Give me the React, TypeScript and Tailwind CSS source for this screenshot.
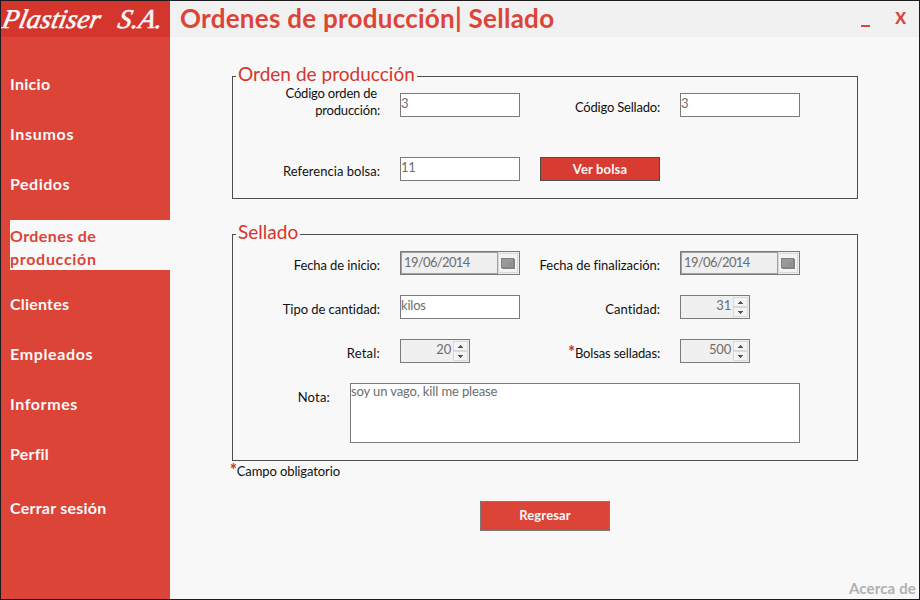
import type { ReactNode } from "react";

function Label({ children, className = "", tracking = "tracking-[0.03px]" }: { children: ReactNode; className?: string; tracking?: string }) {
  return (
    <label className={`mr-5 block shrink-0 whitespace-nowrap text-right text-[13px] leading-[17px] text-[#111] ${tracking} ${className}`}>
      {children}
    </label>
  );
}

function Field({ value }: { value: string }) {
  return (
    <div className="h-6 w-[120px] shrink-0 border border-[#7a7a7a] bg-white text-[13px] leading-[19px] tracking-[-0.2px] text-[#6d6d6d]">
      {value}
    </div>
  );
}

function DateField({ value }: { value: string }) {
  return (
    <div className="flex h-6 w-[120px] shrink-0 border border-[#7a7a7a] bg-[#f0f0f0] text-[13px] leading-[19px] text-[#6d6d6d]">
      <div className="w-[97px] border border-[#a0a0a0] pl-[2px] tracking-[-0.65px]">{value}</div>
      <div className="my-px mr-px flex flex-1 items-center justify-center border border-[#d9d9d9] bg-[#f4f4f4]">
        <svg className="shrink-0" width="14" height="11" viewBox="0 0 14 11" shapeRendering="crispEdges">
          <rect x="1" y="1" width="13" height="10" fill="#858585" />
          <rect x="0" y="0" width="13" height="10" fill="#808080" />
          <rect x="1" y="1" width="11" height="8" fill="#999" />
          <circle cx="9" cy="6" r="1.5" fill="none" stroke="#858585" strokeWidth="0.8" shapeRendering="auto" />
        </svg>
      </div>
    </div>
  );
}

function Spinner({ value }: { value: string }) {
  return (
    <div className="flex h-6 w-[70px] shrink-0 border border-[#7a7a7a] bg-[#f0f0f0] text-[13px] leading-[19px] text-[#6d6d6d]">
      <div className="flex-1 pr-[2px] text-right tracking-[-0.2px]">{value}</div>
      <div className="my-px mr-px flex w-[15px] flex-col">
        <div className="flex h-[10px] items-center justify-center border border-[#d9d9d9] bg-[#f4f4f4]">
          <svg width="5" height="3" shapeRendering="crispEdges"><path d="M2 0h1v1h1v1h1v1H0V2h1V1h1z" fill="#555" /></svg>
        </div>
        <div className="flex h-[10px] items-center justify-center border border-[#d9d9d9] bg-[#f4f4f4]">
          <svg width="5" height="3" shapeRendering="crispEdges"><path d="M0 0h5v1H4v1H3v1H2V2H1V1H0z" fill="#555" /></svg>
        </div>
      </div>
    </div>
  );
}

function NavItem({ children, className = "", tracking = "tracking-[0.3px]" }: { children: ReactNode; className?: string; tracking?: string }) {
  return (
    <a className={`flex h-[50px] items-center pb-[3px] pl-[9px] text-[16px] font-bold leading-[23px] text-[#f8f8f8] ${tracking} ${className}`}>
      <span>{children}</span>
    </a>
  );
}

function Panel({ title, className, children }: { title: string; className: string; children: ReactNode }) {
  return (
    <fieldset className={`w-[626px] border border-[#4d4d4d] ${className}`}>
      <legend className="ml-[3px] h-[21px] whitespace-nowrap px-[2px] text-[19px] leading-[16px] tracking-[0.03px] text-[#d4352c]">{title}</legend>
      {children}
    </fieldset>
  );
}

function Asterisk() {
  return <span className="text-[16px] font-black leading-[10px] text-[#d4352c]">*</span>;
}

export default function App() {
  return (
    <div className="flex h-[600px] w-[920px] overflow-hidden border border-[#1c1a1c] bg-[#f8f8f8] font-[Lato,sans-serif]">
      <aside className="flex w-[169px] shrink-0 flex-col bg-[#dc4438]">
        <div className="h-9 shrink-0 overflow-hidden whitespace-nowrap bg-[#d4352c] pl-[2px] font-['Liberation_Serif',serif] text-[27px] italic leading-[36px] tracking-[0.2px] text-[#f8f8f8]">
          <span className="inline-block origin-left -skew-x-12 [-webkit-text-stroke:0.6px_#f8f8f8] [word-spacing:11px]">Plastiser S.A.</span>
        </div>
        <nav className="mt-[23px]">
          <NavItem>Inicio</NavItem>
          <NavItem tracking="tracking-[0.7px]">Insumos</NavItem>
          <NavItem tracking="tracking-[0.5px]">Pedidos</NavItem>
          <a className="ml-[9px] mt-[10px] block h-[50px] bg-[#f8f8f8] pt-[4px] text-[16px] font-bold leading-[23px] tracking-[0.4px] text-[#dc4438]">
            Ordenes de<br /><span className="tracking-[0.7px]">producción</span>
          </a>
          <NavItem className="mt-[10px]" tracking="tracking-[0.2px]">Clientes</NavItem>
          <NavItem tracking="tracking-[0.65px]">Empleados</NavItem>
          <NavItem tracking="tracking-[0.6px]">Informes</NavItem>
          <NavItem tracking="tracking-[0.2px]">Perfil</NavItem>
          <NavItem className="mt-1" tracking="tracking-[0.25px]">Cerrar sesión</NavItem>
        </nav>
      </aside>
      <div className="flex min-w-0 flex-1 flex-col">
        <header className="flex h-9 shrink-0 justify-between bg-[#f1f1f1] pl-[10px] font-bold text-[#dc4438]">
          <h1 className="whitespace-pre text-[26px] leading-[35px] tracking-[0.26px]">Ordenes de producción| Sellado</h1>
          <div className="flex pr-[13px]">
            <div className="mr-[25px] mt-[24px] h-[2px] w-[9px] bg-[#dc4438]" />
            <span className="text-[16px] font-black leading-[34px]">X</span>
          </div>
        </header>
        <main className="flex flex-1 flex-col pl-[62px]">
          <Panel title="Orden de producción" className="mt-[29px] h-[133px]">
            <div className="flex h-[34px] items-start">
              <Label tracking="tracking-[-0.2px]" className="-mt-[2px] w-[147px]"><span className="pr-[3px]">Código orden de</span><br />producción:</Label>
              <div className="mt-[6px]"><Field value="3" /></div>
              <Label tracking="tracking-[-0.2px]" className="mt-[12px] w-[140px]">Código Sellado:</Label>
              <div className="mt-[6px]"><Field value="3" /></div>
            </div>
            <div className="mt-[36px] flex items-start">
              <Label className="mt-[6px] w-[147px]">Referencia bolsa:</Label>
              <Field value="11" />
              <button className="ml-5 h-6 w-[120px] border border-[#4d4d4d] bg-[#d83b32] text-[13px] font-bold leading-[21px] tracking-[0.15px] text-[#f8f8f8]">Ver bolsa</button>
            </div>
          </Panel>
          <Panel title="Sellado" className="mt-[25px] h-[237px]">
            <div className="mt-[6px] flex flex-col gap-5">
              <div className="flex">
                <Label tracking="tracking-[-0.1px]" className="w-[147px] pt-[6px]">Fecha de inicio:</Label>
                <DateField value="19/06/2014" />
                <Label tracking="tracking-[-0.05px]" className="w-[140px] pt-[6px]">Fecha de finalización:</Label>
                <DateField value="19/06/2014" />
              </div>
              <div className="flex">
                <Label tracking="tracking-[-0.05px]" className="w-[147px] pt-[6px]">Tipo de cantidad:</Label>
                <Field value="kilos" />
                <Label className="w-[140px] pt-[6px]">Cantidad:</Label>
                <Spinner value="31" />
              </div>
              <div className="flex">
                <Label tracking="tracking-[0.2px]" className="w-[147px] pt-[6px]">Retal:</Label>
                <Spinner value="20" />
                <Label tracking="tracking-[-0.15px]" className="w-[190px] pt-[6px]"><Asterisk />Bolsas selladas:</Label>
                <Spinner value="500" />
              </div>
              <div className="flex">
                <Label tracking="tracking-[0.2px]" className="w-[97px] pt-[6px]">Nota:</Label>
                <div className="h-[60px] w-[450px] border border-[#7a7a7a] bg-white text-[13px] leading-[15px] tracking-[-0.12px] text-[#6d6d6d]">soy un vago, kill me please</div>
              </div>
            </div>
          </Panel>
          <p className="-ml-[2px] mt-[2px] h-[17px] text-[13px] leading-[17px] tracking-[-0.1px] text-[#111]"><Asterisk />Campo obligatorio</p>
          <button className="ml-[248px] mt-[21px] h-[30px] w-[130px] border border-[#7a7a7a] bg-[#dc4438] pb-px text-[13px] font-bold leading-[27px] tracking-[0.15px] text-[#f8f8f8]">Regresar</button>
          <footer className="mt-auto pr-[3px] text-right text-[15px] font-bold leading-[22px] tracking-[0.15px] text-[#b0b0b0]">Acerca de</footer>
        </main>
      </div>
    </div>
  );
}
